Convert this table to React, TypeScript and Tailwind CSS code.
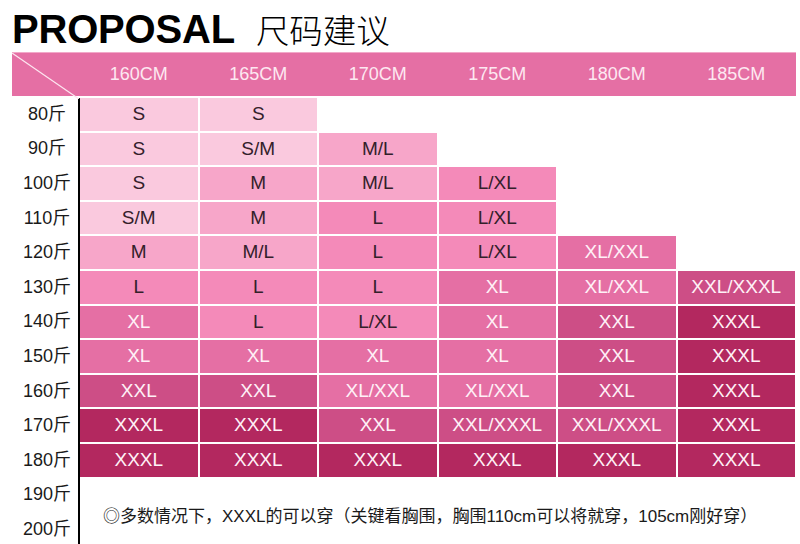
import React from "react";

type Lvl = 1 | 2 | 3 | 4 | 5 | 6;

const lvl: Record<string, Lvl> = {
  S: 1,
  "S/M": 1,
  M: 2,
  "M/L": 2,
  L: 3,
  "L/XL": 3,
  XL: 4,
  "XL/XXL": 4,
  XXL: 5,
  "XXL/XXXL": 5,
  XXXL: 6,
};

const bgCls: Record<Lvl, string> = {
  1: "bg-[#fac9de] text-[#33202a]",
  2: "bg-[#f7a6c9] text-[#33202a]",
  3: "bg-[#f48ab9] text-[#33202a]",
  4: "bg-[#e56fa4] text-[#fff1f7]",
  5: "bg-[#cd4e86] text-[#fff1f7]",
  6: "bg-[#b3285f] text-[#fff1f7]",
};

const heights = ["160CM", "165CM", "170CM", "175CM", "180CM", "185CM"];

const rows: (string | null)[][] = [
  ["S", "S", null, null, null, null],
  ["S", "S/M", "M/L", null, null, null],
  ["S", "M", "M/L", "L/XL", null, null],
  ["S/M", "M", "L", "L/XL", null, null],
  ["M", "M/L", "L", "L/XL", "XL/XXL", null],
  ["L", "L", "L", "XL", "XL/XXL", "XXL/XXXL"],
  ["XL", "L", "L/XL", "XL", "XXL", "XXXL"],
  ["XL", "XL", "XL", "XL", "XXL", "XXXL"],
  ["XXL", "XXL", "XL/XXL", "XL/XXL", "XXL", "XXXL"],
  ["XXXL", "XXXL", "XXL", "XXL/XXXL", "XXL/XXXL", "XXXL"],
  ["XXXL", "XXXL", "XXXL", "XXXL", "XXXL", "XXXL"],
];

const weights = [80, 90, 100, 110, 120, 130, 140, 150, 160, 170, 180, 190, 200];

export default function App() {
  return (
    <div
      className="w-[800px] h-[544px] overflow-hidden bg-white relative"
      style={{ fontFamily: '"Liberation Sans", "Noto Sans CJK SC", sans-serif' }}
    >
      {/* Title */}
      <div className="h-[52px] flex items-baseline pl-[12px] pt-[9px]">
        <span className="text-[40px] leading-none font-bold text-black tracking-[-0.2px]">
          PROPOSAL
        </span>
        <span
          className="ml-[21px] text-[33.5px] leading-none font-light text-black"
          style={{ fontFamily: '"Noto Sans CJK SC", sans-serif' }}
        >
          尺码建议
        </span>
      </div>

      {/* Header bar */}
      <div className="ml-[12px] w-[784px] h-[44px] bg-[#e56fa4] border-t border-[#f2a9c9] flex relative">
        <svg
          className="absolute left-0 top-0"
          width="68"
          height="46"
          viewBox="0 0 68 46"
        >
          <line x1="0" y1="0" x2="67" y2="46" stroke="#fde6f0" strokeWidth="1.2" />
        </svg>
        <div className="w-[68px] shrink-0" />
        <div className="grid grid-cols-6 gap-[2px] w-[715px] items-center">
          {heights.map((h) => (
            <div key={h} className="text-center text-[18px] text-[#fde8f1]">
              {h}
            </div>
          ))}
        </div>
      </div>

      {/* Body */}
      <div className="flex mt-[2px]">
        <div className="w-[80px] shrink-0 border-r-2 border-black h-[460px] flex flex-col gap-[2px]">
          {weights.map((w) => (
            <div
              key={w}
              className="h-[32.6px] shrink-0 flex items-center justify-center pl-[16px] text-[18px] text-[#1a1a1a]"
            >
              {w}斤
            </div>
          ))}
        </div>
        <div className="flex flex-col">
          <div className="grid grid-cols-6 gap-[2px] w-[715px]">
            {rows.flatMap((r, ri) =>
              r.map((c, ci) =>
                c ? (
                  <div
                    key={ri + "-" + ci}
                    className={
                      "h-[32.6px] flex items-center justify-center text-[19px] " +
                      bgCls[lvl[c]]
                    }
                  >
                    {c}
                  </div>
                ) : (
                  <div key={ri + "-" + ci} className="h-[32.6px]" />
                )
              )
            )}
          </div>
          <div className="pl-[23px] pt-[31px] text-[17px] leading-none text-[#1a1a1a] whitespace-nowrap">
            ◎多数情况下，XXXL的可以穿（关键看胸围，胸围110cm可以将就穿，105cm刚好穿）
          </div>
        </div>
      </div>
    </div>
  );
}
